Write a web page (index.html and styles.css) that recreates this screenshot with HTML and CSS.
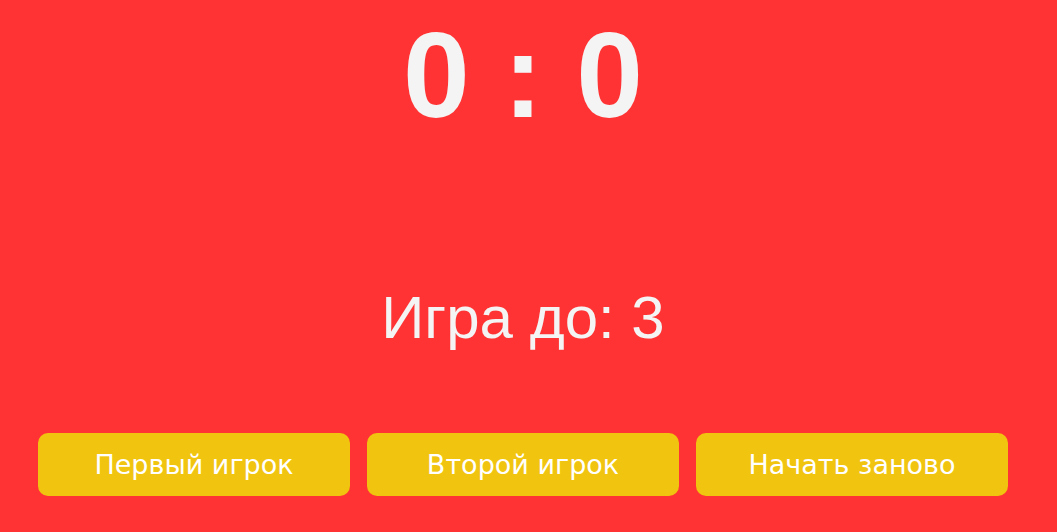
FILE: index.html
```html
<!DOCTYPE html>
<html lang="ru">
<head>
<meta charset="utf-8">
<title>Счёт</title>
<link rel="stylesheet" href="styles.css">
</head>
<body>
<main class="app">
  <h1 class="score">0 : 0</h1>
  <p class="goal">Игра до: 3</p>
  <div class="controls">
    <button class="btn">Первый игрок</button>
    <button class="btn">Второй игрок</button>
    <button class="btn">Начать заново</button>
  </div>
</main>
</body>
</html>
```
FILE: styles.css
```css
html, body {
  height: 100%;
}
body {
  margin: 0;
  background: #ff3333;
  font-family: "Liberation Sans", Arial, sans-serif;
  color: #f4f4f4;
}
.app {
  width: 1030px;
  margin-left: 8px;
  padding-top: 6px;
  display: flex;
  flex-direction: column;
  align-items: center;
}
.score {
  margin: 0;
  font-size: 120px;
  font-weight: bold;
  line-height: 138px;
}
.goal {
  margin: 139px 0 0;
  font-size: 60px;
  line-height: 69px;
}
.controls {
  margin-top: 81px;
  display: flex;
  gap: 17px;
}
.btn {
  width: 312px;
  height: 63px;
  border: none;
  border-radius: 10px;
  background: #f1c40f;
  color: #ffffff;
  font-family: "DejaVu Sans", Verdana, sans-serif;
  font-size: 27px;
  padding: 0;
}
```
